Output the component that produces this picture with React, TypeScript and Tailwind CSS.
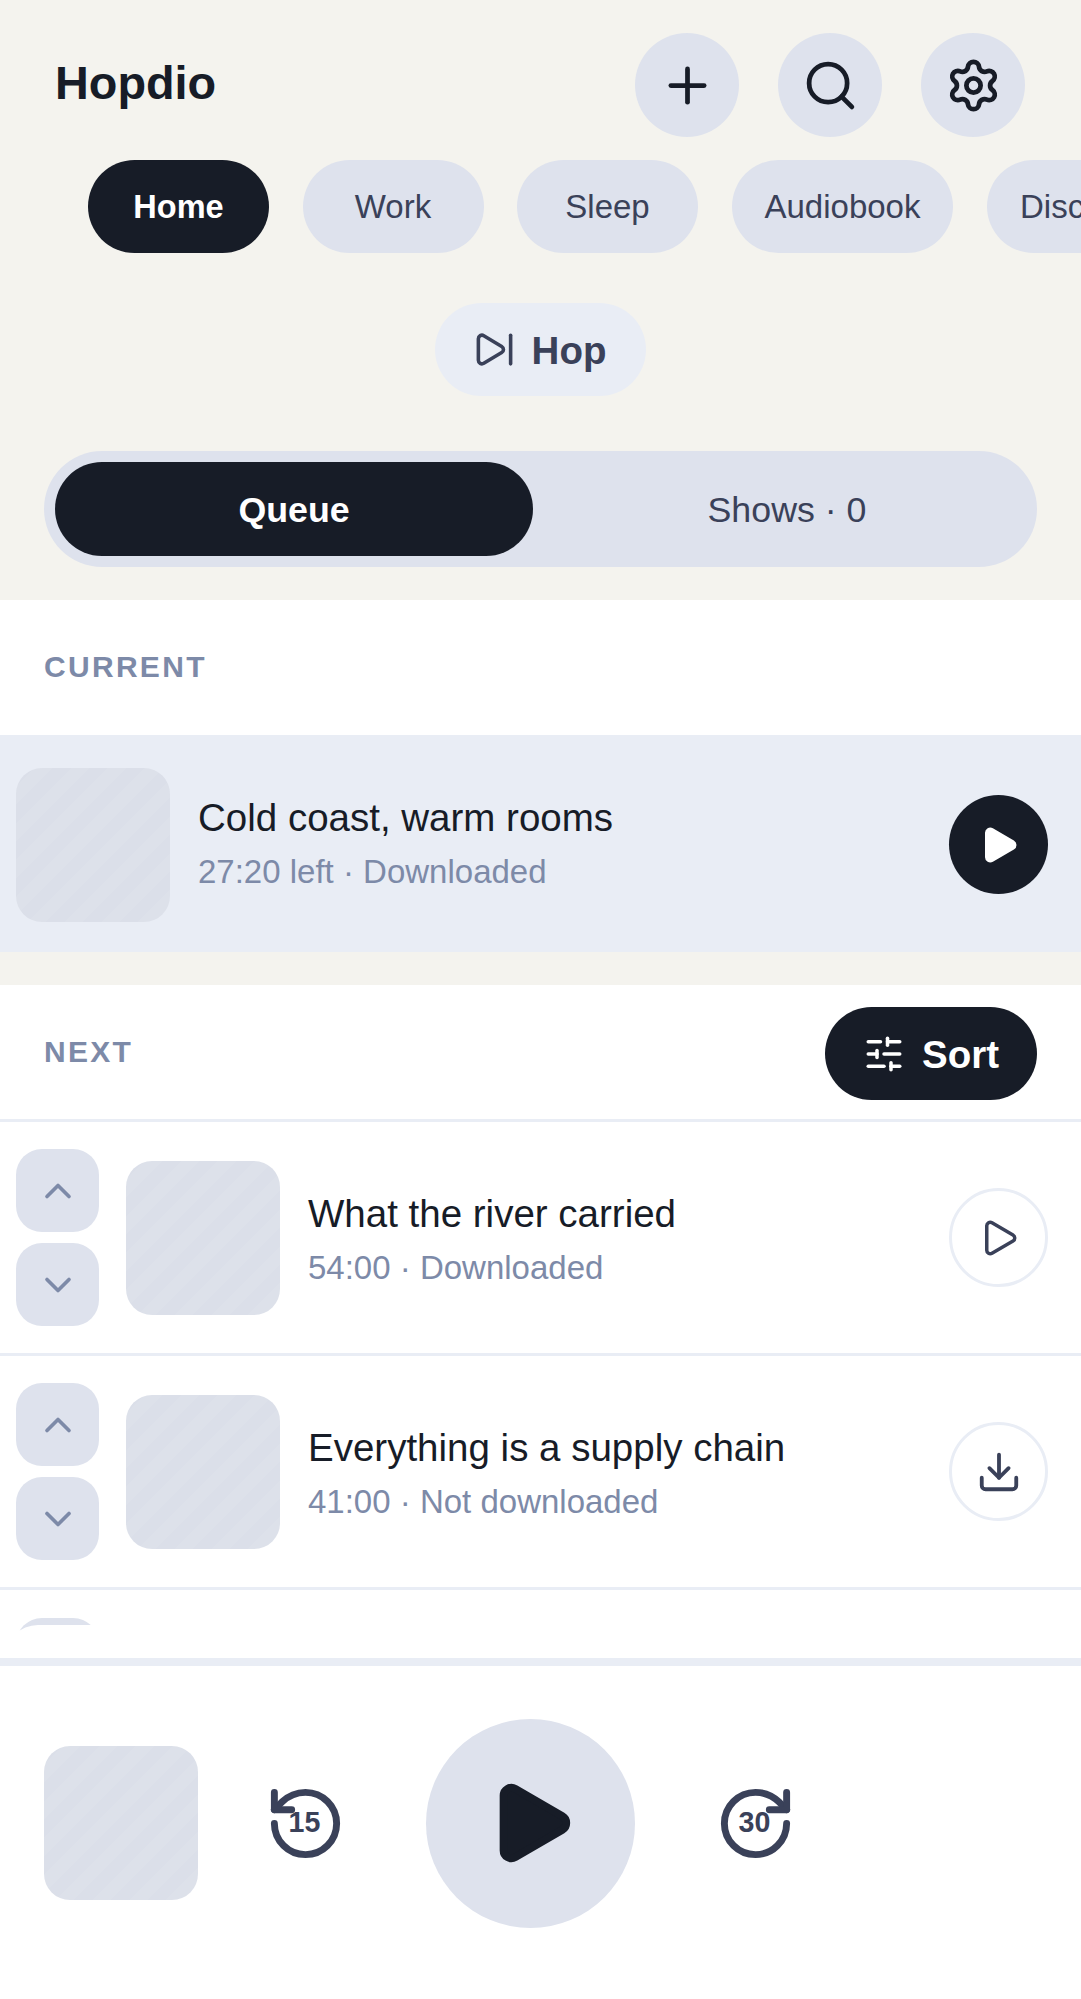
import { Plus, Search, Settings, SkipForward, SlidersHorizontal, Play, ChevronUp, ChevronDown, Download, RotateCcw, RotateCw } from "lucide-react";

const CHIPS = ["Work", "Sleep", "Audiobook", "Discover"];

function Thumb() {
  return (
    <div className="w-[154px] h-[154px] shrink-0 rounded-[26px] bg-[repeating-linear-gradient(135deg,#dbdfe9_0px,#dbdfe9_13px,#dde1ea_13px,#dde1ea_26px)]" />
  );
}

function MoveButtons() {
  return (
    <div className="flex flex-col gap-[11px] shrink-0">
      <button className="w-[83px] h-[83px] rounded-[26px] bg-[#dee2ed] flex items-center justify-center text-[#7d8aa8]">
        <ChevronUp size={44} />
      </button>
      <button className="w-[83px] h-[83px] rounded-[26px] bg-[#dee2ed] flex items-center justify-center text-[#7d8aa8]">
        <ChevronDown size={44} />
      </button>
    </div>
  );
}

function QueueRow({ title, meta, download }: { title: string; meta: string; download?: boolean }) {
  return (
    <div className="h-[234px] flex items-center pl-[16px] pr-[33px] border-b-[3px] border-[#e9edf5]">
      <MoveButtons />
      <div className="ml-[27px]">
        <Thumb />
      </div>
      <div className="ml-[28px] flex-1 pt-[7px]">
        <div className="text-[38.5px] leading-[54px] text-[#171c27]">{title}</div>
        <div className="text-[33px] leading-[54px] text-[#7d8aa8]">{meta}</div>
      </div>
      <button className="w-[99px] h-[99px] rounded-full border-[3px] border-[#e9edf5] flex items-center justify-center text-[#3a4159]">
        {download ? <Download size={46} /> : <Play size={42} />}
      </button>
    </div>
  );
}

export default function App() {
  return (
    <div className="h-[1999px] w-[1081px] flex flex-col overflow-hidden bg-white font-['Liberation_Sans',Arial,sans-serif]">
      <section className="h-[600px] shrink-0 bg-[#f4f3ee]">
        <header className="flex items-center justify-between pt-[33px] pl-[55px] pr-[56px]">
          <h1 className="text-[46.8px] leading-none font-bold text-[#171c27] mb-[3px]">Hopdio</h1>
          <div className="flex gap-[39px] text-[#171c27]">
            <button className="w-[104px] h-[104px] rounded-full bg-[#dee2ed] flex items-center justify-center">
              <Plus size={57} />
            </button>
            <button className="w-[104px] h-[104px] rounded-full bg-[#dee2ed] flex items-center justify-center">
              <Search size={57} />
            </button>
            <button className="w-[104px] h-[104px] rounded-full bg-[#dee2ed] flex items-center justify-center">
              <Settings size={57} />
            </button>
          </div>
        </header>

        <div className="mt-[23px] flex gap-[33.5px] pl-[88px] overflow-hidden">
          <button className="h-[93px] w-[181px] pt-[1px] shrink-0 rounded-full bg-[#171c27] text-white text-[32.5px] font-bold">
            Home
          </button>
          {CHIPS.map((chip) => (
            <button
              key={chip}
              className="h-[93px] min-w-[181px] px-[33px] shrink-0 rounded-full bg-[#dee2ed] text-[#3a4159] text-[33px]"
            >
              {chip}
            </button>
          ))}
        </div>

        <div className="mt-[50px] flex justify-center">
          <button className="h-[93px] w-[211px] pr-[2px] rounded-full bg-[#e9edf5] text-[#3a4159] flex items-center justify-center gap-[16px] text-[38.5px] font-bold">
            <SkipForward size={43} />
            <span className="pt-[2px]">Hop</span>
          </button>
        </div>

        <div className="mt-[55px] mx-[44px] h-[116px] p-[11px] rounded-full bg-[#dee2ed] flex gap-[15px]">
          <button className="flex-1 pt-[3px] rounded-full bg-[#171c27] text-white text-[35.75px] font-bold">Queue</button>
          <button className="flex-1 pt-[3px] rounded-full text-[#3a4159] text-[35.75px]">Shows · 0</button>
        </div>
      </section>

      <div className="h-[137px] shrink-0 flex items-center pl-[44px] pb-[2px] border-b-[2px] border-[#e9edf5]">
        <span className="text-[30px] font-bold tracking-[2.3px] text-[#7d8aa8]">CURRENT</span>
      </div>

      <div className="h-[215px] shrink-0 bg-[#e9edf5] flex items-center pl-[16px] pr-[33px]">
        <Thumb />
        <div className="ml-[28px] flex-1">
          <div className="text-[38.5px] leading-[54px] text-[#171c27]">Cold coast, warm rooms</div>
          <div className="text-[33px] leading-[54px] text-[#7d8aa8]">27:20 left · Downloaded</div>
        </div>
        <button className="w-[99px] h-[99px] rounded-full bg-[#171c27] flex items-center justify-center text-white">
          <Play size={42} fill="currentColor" />
        </button>
      </div>

      <div className="h-[33px] shrink-0 bg-[#f4f3ee]" />

      <div className="h-[137px] shrink-0 flex items-center justify-between pt-[3px] px-[44px] border-b-[3px] border-[#e9edf5]">
        <span className="text-[30px] font-bold tracking-[2.3px] text-[#7d8aa8] mb-[5px]">NEXT</span>
        <button className="h-[93px] w-[212px] rounded-full bg-[#171c27] text-white flex items-center justify-center gap-[17px] text-[38.5px] font-bold">
          <SlidersHorizontal size={42} />
          <span className="pt-[3px]">Sort</span>
        </button>
      </div>

      <div className="relative flex-1 min-h-0 overflow-hidden">
        <QueueRow title="What the river carried" meta="54:00 · Downloaded" />
        <QueueRow title="Everything is a supply chain" meta="41:00 · Not downloaded" download />
        <div className="pl-[16px] pt-[28px]">
          <MoveButtons />
        </div>
        {/* list fades under this white sheet */}
        <div className="absolute left-[5px] right-0 top-[503px] bottom-0 bg-white rounded-tl-[38px]" />
      </div>

      <div className="h-[8px] shrink-0 bg-[#e9edf5]" />

      <div className="h-[333px] shrink-0 flex items-center pl-[44px] pb-[19px]">
        <Thumb />
        <button className="relative ml-[66px] w-[83px] h-[83px] flex items-center justify-center text-[#3a4159]">
          <RotateCcw size={83} />
          <span className="absolute inset-0 pr-[2px] pb-[1px] flex items-center justify-center text-[28.6px] font-bold">15</span>
        </button>
        <button className="ml-[79px] w-[209px] h-[209px] rounded-full bg-[#dee2ed] flex items-center justify-center text-[#171c27]">
          <Play size={94} fill="currentColor" />
        </button>
        <button className="relative ml-[79px] w-[83px] h-[83px] flex items-center justify-center text-[#3a4159]">
          <RotateCw size={83} />
          <span className="absolute inset-0 pr-[2px] pb-[1px] flex items-center justify-center text-[28.6px] font-bold">30</span>
        </button>
      </div>
    </div>
  );
}
